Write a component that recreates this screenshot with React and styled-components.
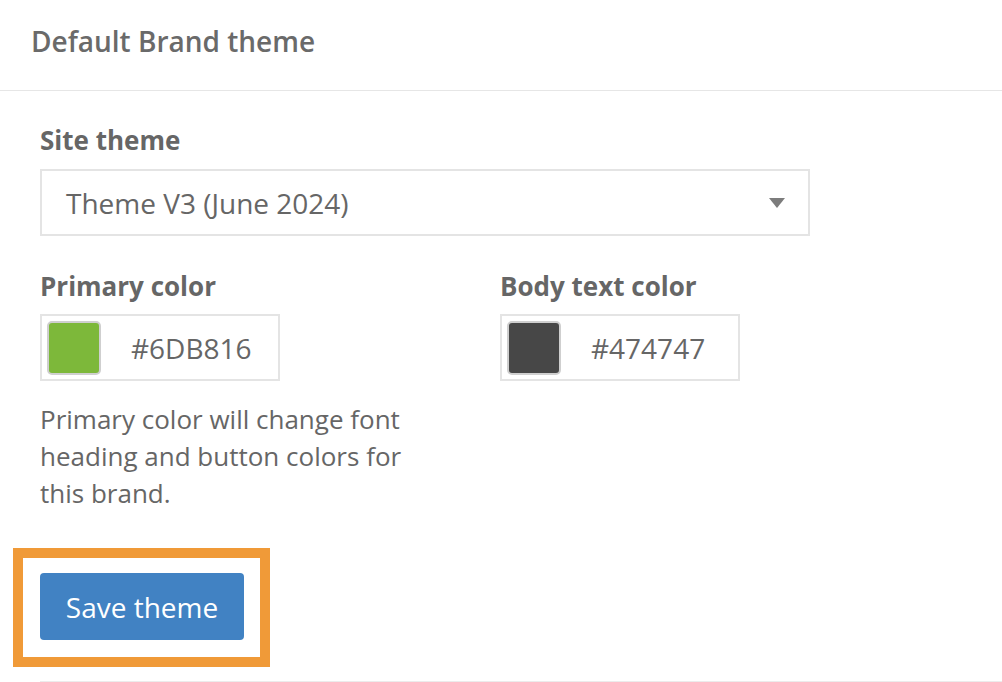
import React from "react";
import styled, { createGlobalStyle } from "styled-components";

const GlobalStyle = createGlobalStyle`
  html, body {
    margin: 0;
    padding: 0;
    background: #fff;
  }
  body {
    font-family: "Open Sans", "Liberation Sans", sans-serif;
    color: #666;
  }
`;

const Page = styled.div`
  width: 1002px;
  height: 682px;
  overflow: hidden;
  background: #fff;
`;

const Header = styled.header`
  height: 91px;
  box-sizing: border-box;
  padding: 22px 0 0 31px;
  border-bottom: 1px solid #e6e6e6;
`;

const Title = styled.h2`
  margin: 0;
  font-size: 28px;
  font-weight: 600;
  color: #6a6a6a;
  line-height: 38px;
`;

const Body = styled.div`
  padding: 32px 0 0 40px;
  display: flex;
  flex-direction: column;
`;

const Label = styled.div`
  font-size: 26px;
  font-weight: 700;
  color: #666;
  line-height: 34px;
  margin-bottom: ${(p) => p.$gap || "11px"};
`;

const SelectBox = styled.div`
  width: 770px;
  height: 67px;
  box-sizing: border-box;
  border: 2px solid #e4e4e4;
  display: flex;
  align-items: center;
  justify-content: space-between;
  padding: 0 23px 0 24px;
  font-size: 28px;
  color: #666;
`;

const Caret = styled.span`
  width: 0;
  height: 0;
  border-left: 8px solid transparent;
  border-right: 8px solid transparent;
  border-top: 10px solid #7c7c7c;
`;

const ColorRow = styled.div`
  display: grid;
  grid-template-columns: 460px 460px;
  margin-top: 33px;
`;

const Field = styled.div`
  display: flex;
  flex-direction: column;
`;

const ColorInput = styled.div`
  width: 240px;
  height: 67px;
  box-sizing: border-box;
  border: 2px solid #e4e4e4;
  display: flex;
  align-items: center;
  padding-left: 5px;
  gap: 30px;
  font-size: 28px;
  color: #666;
`;

const Swatch = styled.span`
  width: 54px;
  height: 54px;
  box-sizing: border-box;
  border-radius: 5px;
  border: 2px solid #cfcfcf;
  background: ${(p) => p.$color};
`;

const Help = styled.p`
  margin: 20px 0 0;
  width: 400px;
  font-size: 26px;
  line-height: 37px;
  color: #666;
`;

const Highlight = styled.div`
  align-self: flex-start;
  margin: 36px 0 0 -27px;
  border: 10px solid #f09a38;
  padding: 15px 16px 17px 17px;
`;

const Button = styled.button`
  display: block;
  width: 204px;
  height: 67px;
  border: none;
  border-radius: 4px;
  background: #4182c3;
  color: #fff;
  font-family: "Open Sans", "Liberation Sans", sans-serif;
  font-size: 28px;
  padding: 0;
`;

const Divider = styled.div`
  margin-top: 14px;
  height: 1px;
  background: #ececec;
`;

export default function App() {
  return (
    <Page>
      <GlobalStyle />
      <Header>
        <Title>Default Brand theme</Title>
      </Header>
      <Body>
        <Label $gap="12px">Site theme</Label>
        <SelectBox>
          <span>Theme V3 (June 2024)</span>
          <Caret />
        </SelectBox>
        <ColorRow>
          <Field>
            <Label>Primary color</Label>
            <ColorInput>
              <Swatch $color="#7db83a" />
              <span>#6DB816</span>
            </ColorInput>
            <Help>
              Primary color will change font heading and button colors for
              this brand.
            </Help>
          </Field>
          <Field>
            <Label>Body text color</Label>
            <ColorInput>
              <Swatch $color="#474747" />
              <span>#474747</span>
            </ColorInput>
          </Field>
        </ColorRow>
        <Highlight>
          <Button>Save theme</Button>
        </Highlight>
        <Divider />
      </Body>
    </Page>
  );
}
